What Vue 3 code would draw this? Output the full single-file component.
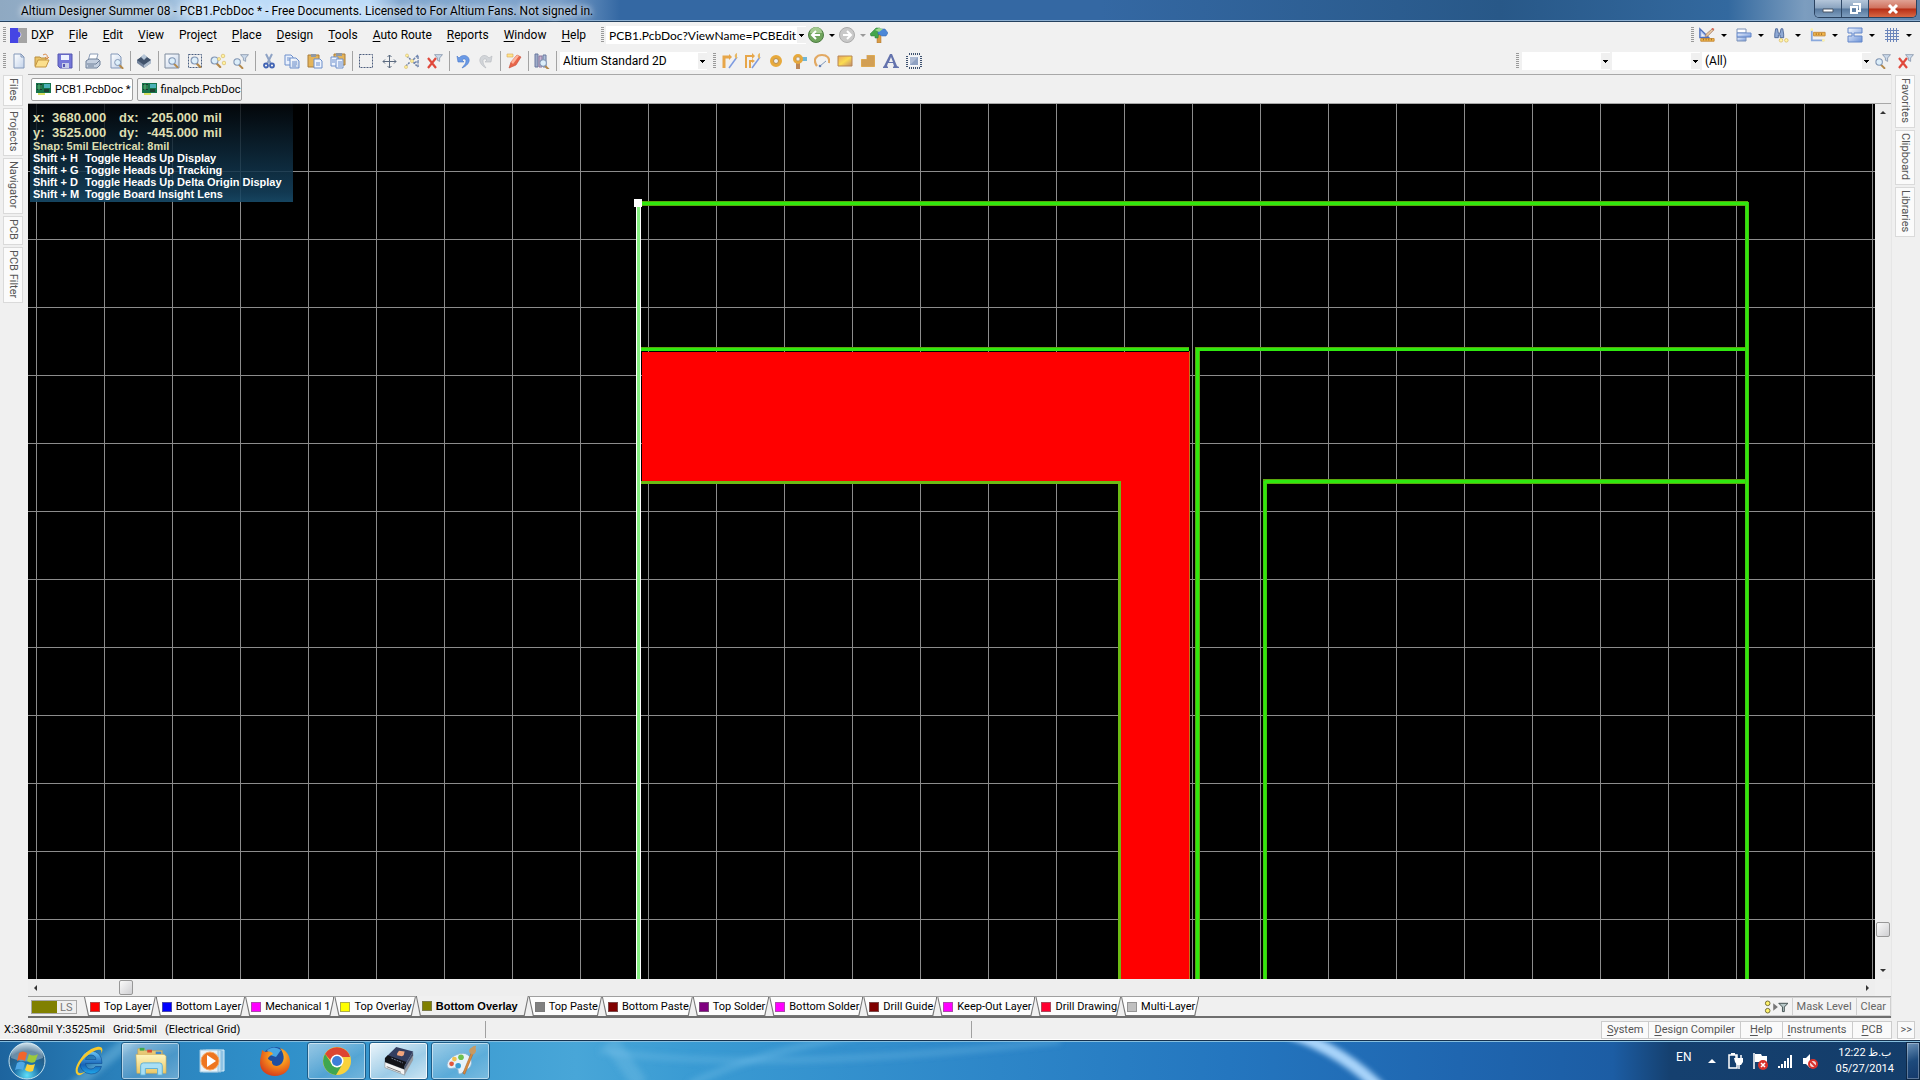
<script setup>

import { ref } from 'vue'

const menus = [
    ['D', 'X', 'P'], ['', 'F', 'ile'], ['', 'E', 'dit'], ['', 'V', 'iew'], ['Proje', 'c', 't'],
    ['', 'P', 'lace'], ['', 'D', 'esign'], ['', 'T', 'ools'], ['', 'A', 'uto Route'],
    ['', 'R', 'eports'], ['', 'W', 'indow'], ['', 'H', 'elp'],
];

const toolGroups = [
    ['new', 'open', 'save'],
    ['print', 'preview'],
    ['layers'],
    ['zoomdoc', 'zoomarea', 'zoompts', 'zoomfilter'],
    ['cut', 'copy', 'paste', 'pastespecial'],
    ['select', 'move', 'deselect', 'clearfilter'],
    ['undo', 'redo'],
    ['pencil'],
    ['browse'],
];

const placeTools = ['route', 'diffroute', 'pad', 'via', 'arc', 'fill', 'polygon', 'string', 'component'];
const utilTools = ['drafting', 'align', 'find', 'dimension', 'room', 'grid'];

const docs = ['PCB1.PcbDoc *', 'finalpcb.PcbDoc'];
const activeDoc = ref(0);

const leftPanels = ['Files', 'Projects', 'Navigator', 'PCB', 'PCB Filter'];
const rightPanels = ['Favorites', 'Clipboard', 'Libraries'];

const hints = [
    ['Shift + H', 'Toggle Heads Up Display'],
    ['Shift + G', 'Toggle Heads Up Tracking'],
    ['Shift + D', 'Toggle Heads Up Delta Origin Display'],
    ['Shift + M', 'Toggle Board Insight Lens'],
];

const layers = [
    { name: 'Top Layer', color: '#ff0000' },
    { name: 'Bottom Layer', color: '#0000ff' },
    { name: 'Mechanical 1', color: '#ff00ff' },
    { name: 'Top Overlay', color: '#ffff00' },
    { name: 'Bottom Overlay', color: '#808000' },
    { name: 'Top Paste', color: '#808080' },
    { name: 'Bottom Paste', color: '#800000' },
    { name: 'Top Solder', color: '#800080' },
    { name: 'Bottom Solder', color: '#ff00ff' },
    { name: 'Drill Guide', color: '#800000' },
    { name: 'Keep-Out Layer', color: '#ff00ff' },
    { name: 'Drill Drawing', color: '#ff0030' },
    { name: 'Multi-Layer', color: '#c0c0c0' },
];
const activeLayer = ref('Bottom Overlay');

const panelButtons = [['S', 'ystem'], ['D', 'esign Compiler'], ['H', 'elp'], ['I', 'nstruments'], ['P', 'CB']];

const apps = [
    { icon: 'ie', label: 'Internet Explorer' },
    { icon: 'explorer', label: 'Explorer', state: 'open' },
    { icon: 'wmp', label: 'Media Player' },
    { icon: 'firefox', label: 'Firefox' },
    { icon: 'chrome', label: 'Chrome', state: 'open' },
    { icon: 'altium', label: 'Altium Designer', state: 'active' },
    { icon: 'paint', label: 'Paint', state: 'open' },
];

</script>

<template>
    <!-- icon sprite -->
    <svg class="sprite" aria-hidden="true">
        <defs>
            <linearGradient id="gPaper" x1="0" y1="0" x2="1" y2="1"><stop offset="0" stop-color="#fff" /><stop offset="1" stop-color="#c3d3ea" /></linearGradient>
            <linearGradient id="gGold" x1="0" y1="0" x2="1" y2="1"><stop offset="0" stop-color="#e8a860" /><stop offset=".5" stop-color="#fbdc50" /><stop offset="1" stop-color="#c08a70" /></linearGradient>
            <linearGradient id="gBlue" x1="0" y1="0" x2="1" y2="1"><stop offset="0" stop-color="#f4f8ff" /><stop offset="1" stop-color="#6d93d8" /></linearGradient>
            <radialGradient id="gOrb" cx=".5" cy=".9" r=".9"><stop offset="0" stop-color="#5fe0f8" /><stop offset=".4" stop-color="#1c6fa8" /><stop offset=".75" stop-color="#285a80" /><stop offset="1" stop-color="#b8d4e4" /></radialGradient>
            <radialGradient id="gFox" cx=".6" cy=".3" r=".7"><stop offset="0" stop-color="#ffd83a" /><stop offset=".5" stop-color="#f58a1c" /><stop offset="1" stop-color="#d9431a" /></radialGradient>
            <linearGradient id="gFolder" x1="0" y1="0" x2="0" y2="1"><stop offset="0" stop-color="#fdf5c0" /><stop offset="1" stop-color="#ecc968" /></linearGradient>
            <linearGradient id="gIe" x1="0" y1="0" x2="0" y2="1"><stop offset="0" stop-color="#6cc8f4" /><stop offset=".6" stop-color="#1763b8" /><stop offset="1" stop-color="#1fa9ea" /></linearGradient>
        </defs>
        <symbol id="lens" viewBox="0 0 16 16">
            <path d="M9 11l4 4" stroke="#b5894a" stroke-width="2.4" stroke-linecap="round" />
            <circle cx="7" cy="8" r="3.7" fill="#dceefa" stroke="#8296b4" stroke-width="1.2" />
        </symbol>
        <symbol id="funnel" viewBox="0 0 16 16"><path d="M1 2h14l-5 6v6l-4-2V8z" fill="#cbd9ea" stroke="#60748f" /></symbol>
        <symbol id="app" viewBox="0 0 16 16">
            <path d="M1 10L6 2l9 2-4 9z" fill="#27354c" /><path d="M1 10l10 3 4-9v3l-4 8L1 12z" fill="#8b98a8" />
            <path d="M6 6l2-2 3 1-1 3-4-1z" fill="#f0a070" />
        </symbol>
        <symbol id="dxp" viewBox="0 0 18 18"><path d="M0 1h9v4c3 0 3 6 0 6v6H0z" fill="#4545e4" /><path d="M9 1h9v16H9v-5c4-1 4-7 0-7z" fill="#a4a4a4" /></symbol>
        <symbol id="new" viewBox="0 0 16 16"><path d="M3 1h7l3 3v11H3z" fill="url(#gPaper)" stroke="#8297b8" /><path d="M10 1v3h3" fill="none" stroke="#8297b8" /></symbol>
        <symbol id="open" viewBox="0 0 16 16">
            <path d="M1 13V4h5l1 1h5v3" fill="#e9c367" stroke="#b98e3f" /><path d="M1 14l3-7h11l-3 7z" fill="#fbdf8c" stroke="#c39543" />
            <path d="M9 2c3-2 5 0 4 3m-2-1l2 2 2-2" fill="none" stroke="#d98c4a" />
        </symbol>
        <symbol id="save" viewBox="0 0 16 16"><path d="M1 1h14v14H3l-2-2z" fill="#7476d8" stroke="#5556b0" /><path d="M4 2h8v5H4z" fill="#edf2ff" /><path d="M5 10h7v5H5z" fill="#c7cce8" /><path d="M6 11h2v3H6z" fill="#5556b0" /></symbol>
        <symbol id="print" viewBox="0 0 16 16"><path d="M5 1h8l-2 7H3z" fill="#fff" stroke="#8b9cb6" /><path d="M1 8l3-2h9l2 2v4l-3 3H1z" fill="#c4cfdf" stroke="#6f8099" /><path d="M2 11h9l3-3M3 13h6" fill="none" stroke="#6f8099" /></symbol>
        <symbol id="preview" viewBox="0 0 16 16"><path d="M3 1h7l3 3v11H3z" fill="url(#gPaper)" stroke="#8297b8" /><use href="#lens" x="4" y="3" width="13" height="13" /></symbol>
        <symbol id="layers" viewBox="0 0 16 16"><path d="M1 7l7-5 7 5v3l-7 5-7-5z" fill="#74849c" /><path d="M1 7l7-5 7 5-7 5z" fill="#41536c" /><path d="M5 4l3-3 3 3-3 3z" fill="#b6c6d8" /><path d="M8 12v3l7-5V7z" fill="#aebccd" /></symbol>
        <symbol id="zoomdoc" viewBox="0 0 16 16"><path d="M1 1h14v14H1z" fill="url(#gPaper)" stroke="#7c8a9d" /><use href="#lens" x="2" y="1" width="14" height="14" /></symbol>
        <symbol id="zoomarea" viewBox="0 0 16 16"><path d="M1.500 1.500h13v13h-13z" fill="none" stroke="#4a5f80" stroke-dasharray="2 1" /><use href="#lens" x="1" y="0" width="15" height="15" /></symbol>
        <symbol id="zoompts" viewBox="0 0 16 16"><use href="#lens" x="-2" y="0" width="15" height="15" /><g fill="#fff2a0" stroke="#d7ba68" stroke-width=".7"><circle cx="13" cy="3" r="1.8" /><circle cx="9" cy="6" r="1.5" /><circle cx="14" cy="10" r="1.8" /></g></symbol>
        <symbol id="zoomfilter" viewBox="0 0 16 16"><use href="#lens" x="-2" y="2" width="14" height="14" /><use href="#funnel" x="7" y="0" width="9" height="10" /></symbol>
        <symbol id="cut" viewBox="0 0 16 16"><path d="M5 1l5 10M11 1L6 11" stroke="#8fa3c5" stroke-width="2" /><g fill="none" stroke="#4264b4" stroke-width="1.8"><circle cx="5" cy="12.500" r="2" /><circle cx="11" cy="12.500" r="2" /></g></symbol>
        <symbol id="copy" viewBox="0 0 16 16"><path d="M1 2h6l2 2v8H1z" fill="#eaf1fd" stroke="#6c8fcb" /><path d="M6 5h6l3 3v7H6z" fill="url(#gPaper)" stroke="#6c8fcb" /><path d="M3 5h3M3 7h3M8 9h5M8 11h5M8 13h4" stroke="#6c8fcb" /></symbol>
        <symbol id="paste" viewBox="0 0 16 16"><path d="M1 2h11v12H1z" fill="#e4b45a" stroke="#a97d3a" /><path d="M4 1h5v3H4z" fill="#8f99a6" /><path d="M7 6h6l2 2v7H7z" fill="#eef4fe" stroke="#6c8fcb" /><path d="M9 10h4M9 12h4" stroke="#6c8fcb" /></symbol>
        <symbol id="pastespecial" viewBox="0 0 16 16"><path d="M4 1h11v11H4z" fill="#e4b45a" stroke="#a97d3a" /><path d="M6 0h6v3H6z" fill="#8f99a6" /><path d="M1 4h7v9H1z" fill="#eef4fe" stroke="#6c8fcb" /><path d="M6 6h7v9H6z" fill="#eef4fe" stroke="#6c8fcb" /><path d="M8 9h4M8 11h4M8 13h4M2 7h3M2 9h3" stroke="#6c8fcb" /></symbol>
        <symbol id="select" viewBox="0 0 16 16"><path d="M1.500 1.500h13v13h-13z" fill="none" stroke="#4e5f7e" stroke-dasharray="2 1" /></symbol>
        <symbol id="move" viewBox="0 0 16 16"><path d="M8.500 2v13M2 8.500h13M6.500 4l2-2 2 2M6.500 13l2 2 2-2M4 6.500l-2 2 2 2M13 6.500l2 2-2 2" fill="none" stroke="#5c6b80" /></symbol>
        <symbol id="deselect" viewBox="0 0 16 16"><path d="M3 3l4 4 3 3 4 4M2 13l4-4" fill="none" stroke="#6e82a5" stroke-width="1.500" stroke-dasharray="2 1" /><path d="M9 7l5-5v5M10 10l4-2v6" fill="none" stroke="#7187b0" stroke-width="1.500" stroke-dasharray="3 1" /><g fill="#fff2a0" stroke="#d7ba68" stroke-width=".6"><circle cx="3" cy="2.500" r="1.500" /><circle cx="2" cy="14" r="1.500" /><circle cx="8" cy="8" r="1.500" /></g></symbol>
        <symbol id="clearfilter" viewBox="0 0 16 16"><use href="#funnel" x="7" y="0" width="9" height="10" /><path d="M1 5l8 10M9 5L1 15" stroke="#e0493c" stroke-width="2.200" /></symbol>
        <symbol id="undo" viewBox="0 0 16 16"><path d="M2 3l1 6h6l-2-2c2-2 4-1 4 1 0 3-2 4-4 7 5-2 8-6 7-9-1-4-7-5-10-1z" fill="#6a9ae6" stroke="#4676c8" stroke-width=".6" /></symbol>
        <symbol id="redo" viewBox="0 0 16 16"><path d="M14 3l-1 6H7l2-2c-2-2-4-1-4 1 0 3 1 4 3 7-4-2-7-6-6-9 1-4 6-5 9-1z" fill="#d2d5d9" stroke="#b5b9be" stroke-width=".6" /></symbol>
        <symbol id="pencil" viewBox="0 0 16 16"><path d="M3 15l2-6 6-7 4 2-5 8z" fill="#e8654a" stroke="#c44d38" stroke-width=".6" /><path d="M5 9l6-7 2 1-6 8z" fill="#ffb49a" /><path d="M1 1h6v3H1z" fill="#ffe58a" stroke="#d9a45a" stroke-width=".6" /></symbol>
        <symbol id="browse" viewBox="0 0 16 16"><path d="M1 1h3v13H1z" fill="#9fabc9" stroke="#68799e" /><path d="M5 3h3v11H5z" fill="#c7b3d2" stroke="#8c769d" /><path d="M9 2h3v12H9z" fill="#aebdd8" stroke="#68799e" /><use href="#lens" x="3" y="3" width="14" height="14" /></symbol>
        <symbol id="route" viewBox="0 0 16 16"><path d="M2 15V4h6" fill="none" stroke="#e7a649" stroke-width="3" /><path d="M7 1l3 3-3 3" fill="#e7a649" /><path d="M7 15l8-11" stroke="#7d9be0" stroke-width="1.500" /><path d="M15 0v6c-3-1-3-5 0-6z" fill="#e7b863" /></symbol>
        <symbol id="diffroute" viewBox="0 0 16 16"><path d="M1 15V3h7M5 15V8h3" fill="none" stroke="#e7a649" stroke-width="2" /><path d="M7 0l3 3-3 3M7 6l3 2-3 2" fill="#e7a649" /><path d="M7 15l8-11" stroke="#7d9be0" stroke-width="1.500" /><path d="M15 0v6c-3-1-3-5 0-6z" fill="#e7b863" /></symbol>
        <symbol id="pad" viewBox="0 0 16 16"><circle cx="8" cy="8" r="4" fill="#fff8d8" stroke="#e7a93c" stroke-width="4" /><circle cx="8" cy="8" r="2.500" fill="#f0f0f0" stroke="#b78c4b" /></symbol>
        <symbol id="via" viewBox="0 0 16 16"><path d="M9 4h7v4H9z" fill="#6fb7d8" /><path d="M5 10h4v6H5z" fill="#bd8757" /><circle cx="7" cy="6" r="3.500" fill="#fff6cc" stroke="#e7a93c" stroke-width="3" /><circle cx="7" cy="6" r="2" fill="#f0f0f0" stroke="#b78c4b" stroke-width=".7" /></symbol>
        <symbol id="arc" viewBox="0 0 16 16"><path d="M3 13C-2 6 3 2 8 2s8 3 7 8" fill="none" stroke="#e2a963" stroke-width="2.200" /><path d="M6 13l6-5" stroke="#8199bb" /><circle cx="6" cy="13" r="1.300" fill="#6582b7" /></symbol>
        <symbol id="fill" viewBox="0 0 16 16"><path d="M1 3h14v10H1z" fill="url(#gGold)" stroke="#b78554" /></symbol>
        <symbol id="polygon" viewBox="0 0 16 16"><path d="M1 6h6V2h8v12H1z" fill="#edb956" /><path d="M1 8h14M1 10h14M1 12h14M7 4h8M7 6h8M3 6v8M5 6v8M7 2v12M9 2v12M11 2v12M13 2v12" stroke="#bf8c54" stroke-width=".7" /></symbol>
        <symbol id="string" viewBox="0 0 16 16"><path d="M0 15v-1l1-1L7 1h2l5 12 2 1v1h-6v-1l1-1-1-3H5l-1 3 1 1v1zM6 9h4L8 4z" fill="#6473ad" /></symbol>
        <symbol id="component" viewBox="0 0 16 16"><path d="M3 1h11M3 15h11M1 3v11M15 3v11" fill="none" stroke="#3e5270" stroke-width="2" stroke-dasharray="1 1" /><path d="M3.500 3.500h9v9h-9z" fill="#8fa1c2" stroke="#f4f7fc" /><path d="M4 4h8L4 12z" fill="#aebbd4" /></symbol>
        <symbol id="drafting" viewBox="0 0 18 16"><path d="M1 1v10h10z" fill="#b9cdf4" stroke="#4c6ebc" stroke-width="1.500" /><path d="M3 6v3h3z" fill="#f1f1f1" /><path d="M7 10l1-3 7-6 2 1-7 7z" fill="#e9c8a0" stroke="#a88a78" /><path d="M14 1l1-1 2 1-1 2z" fill="#d9604c" /><path d="M2 12h15v3H2z" fill="#f0b54b" stroke="#c48735" /><path d="M5 12v2M8 12v2M11 12v2M14 12v2" stroke="#9d6a22" /></symbol>
        <symbol id="align" viewBox="0 0 16 16"><path d="M1 2h9v4H1z" fill="#fff" stroke="#7d92b8" /><path d="M1 10h9v4H1z" fill="url(#gBlue)" stroke="#7d92b8" /><path d="M1 6h14v4H1z" fill="url(#gBlue)" stroke="#6386c9" /></symbol>
        <symbol id="find" viewBox="0 0 18 18"><path d="M2 8l1-6h2l1 5h2l1-5h2l1 6v4H8V9H6v3H2z" fill="#8fa9d4" stroke="#4c6797" /><g fill="#fff4a8" stroke="#d8b860" stroke-width=".8"><circle cx="9" cy="15" r="2" /><circle cx="15" cy="15" r="2" /></g></symbol>
        <symbol id="dimension" viewBox="0 0 18 16"><path d="M2 2v12h14" fill="none" stroke="#89a8dc" stroke-width="2" /><path d="M4 5h13v4H4z" fill="#f0b54b" stroke="#c48735" /><path d="M7 6v2M10 6v2M13 6v2" stroke="#9d6a22" /><circle cx="2" cy="2" r="1.500" fill="#fff4a8" /><circle cx="15" cy="14" r="1.500" fill="#fff4a8" /></symbol>
        <symbol id="room" viewBox="0 0 16 16"><path d="M1 1h14v5H7v3h8v6H1V9h4V6H1z" fill="url(#gBlue)" stroke="#6386c9" /></symbol>
        <symbol id="grid" viewBox="0 0 16 16"><path d="M3.500 1v14M6.500 1v14M9.500 1v14M12.500 1v14M1 3.500h14M1 6.500h14M1 9.500h14M1 12.500h14" stroke="#6c86bb" /></symbol>
        <symbol id="back" viewBox="0 0 16 16"><circle cx="8" cy="8" r="7.500" fill="#6fa45c" stroke="#4d7d42" /><path d="M2 6a6 6 0 0 1 12 0z" fill="#a5cb91" /><path d="M12 8H5M8 4L4 8l4 4" fill="none" stroke="#fff" stroke-width="2" /></symbol>
        <symbol id="forward" viewBox="0 0 16 16"><circle cx="8" cy="8" r="7.500" fill="#c9c9c9" stroke="#aaa" /><path d="M4 8h7M8 4l4 4-4 4" fill="none" stroke="#fff" stroke-width="2" /></symbol>
        <symbol id="palm" viewBox="0 0 18 16"><path d="M7 7h4v9H7z" fill="#d79b45" stroke="#a8702c" stroke-width=".5" /><path d="M0 7l6-6h4L9 5l-1 6H5V9H1z" fill="#45a54b" stroke="#2c7c36" stroke-width=".5" /><path d="M8 2h7l3 4-2 3h-4L8 7z" fill="#4b87d7" stroke="#2f63ad" stroke-width=".5" /><path d="M5 3l4-2 4 1-4 3z" fill="#9edb8a" /></symbol>
        <symbol id="pcb" viewBox="0 0 16 12"><path d="M0 0h15v10H0z" fill="#16734b" /><path d="M1 1h5v6H1z" fill="#183a30" /><path d="M3 1v6M1 3h5M1 5h5" stroke="#54d37e" stroke-width=".8" /><path d="M8 1h6v4H8z" fill="#4ab0b8" /><path d="M8 6h5v3H8z" fill="#1c4232" /><path d="M2 10h7v2H2z" fill="#d7e061" /></symbol>

        <symbol id="orb" viewBox="0 0 38 38">
            <circle cx="19" cy="19" r="18" fill="url(#gOrb)" stroke="#c5e2ee" /><path d="M3 16a16 16 0 0 1 32 0q-16 7-32 0z" fill="#fff" opacity=".3" />
            <path d="M11 11q4-3 8 0l-2 8q-4-3-8 0z" fill="#f0652c" /><path d="M21 12q4 3 9 0l-3 8q-4 2-8-1z" fill="#9cc93c" />
            <path d="M9 21q4-3 8 0l-2 7q-4-2-8 0z" fill="#4fa8e6" /><path d="M19 22q4 2 8 0l-2 7q-4 2-8-1z" fill="#fdd33a" />
        </symbol>
        <symbol id="ie" viewBox="0 0 32 32">
            <path d="M29 18.500H12.500q.5 5.500 5.500 5.500 3 0 4.500-2.500h6Q26 29 18 29 7 28 7 17.500 8 6 18 6q11 .500 11 12.500zM23 14.500q-.5-4.500-5-4.500t-5.500 4.500z" fill="url(#gIe)" stroke="#0d4b91" stroke-width=".6" />
            <path d="M5 30C-3 26 11 4 24 2c5-1 7 2 4 7 1-4 0-5-4-4C14 8 3 21 5 27q2 3 8-1-5 5-8 4z" fill="#f6c92d" />
        </symbol>
        <symbol id="explorer" viewBox="0 0 34 32">
            <path d="M3 3h7l1 2h18v8H3z" fill="#e7c976" stroke="#c6a147" stroke-width=".6" /><path d="M5 2h5v3H5z" fill="#3fa84a" /><path d="M13 4h5v3h-5z" fill="#d94b33" /><path d="M22 6h6v3h-6z" fill="#3a87d4" />
            <path d="M1 9h30l2 2v18H2z" fill="url(#gFolder)" stroke="#d0aa4c" stroke-width=".6" />
            <path d="M6 31V21q0-3 3-3h17q3 0 3 3v10h-5v-7H11v7z" fill="#a8dff5" stroke="#5bafd8" />
        </symbol>
        <symbol id="wmp" viewBox="0 0 32 32"><path d="M9 5h18v21H9z" fill="#8fc4e6" stroke="#d7effb" /><path d="M6 5h18v22H6z" fill="#c5e3f4" stroke="#8bbddd" /><path d="M3 5h18v22H3z" fill="#e8f3fa" stroke="#9bc6e0" /><circle cx="13" cy="16" r="9" fill="#ee7620" stroke="#f5ab6a" /><path d="M10 10l9 6-9 6z" fill="#fff" /></symbol>
        <symbol id="firefox" viewBox="0 0 32 32">
            <circle cx="16" cy="15" r="13" fill="#1f4fa0" /><path d="M8 5q7-5 14 0l-5 7-6-2z" fill="#47a6e4" />
            <path d="M3 5q2 2 4 2c4-1 6 0 7 2-2 1-5 3-5 5 2 1 2 2 4 2-1 5 6 7 10 2 4-6 0-12-2-15 6 2 10 7 10 14 0 9-7 14-15 14S1 26 1 18C1 12 3 8 3 5z" fill="url(#gFox)" />
        </symbol>
        <symbol id="chrome" viewBox="0 0 32 32">
            <circle cx="16" cy="16" r="14" fill="#f9d23c" /><path d="M4 9a14 14 0 0 1 24 0l1 3H16a6 6 0 0 0-5 5z" fill="#dd4532" /><path d="M4 9a14 14 0 0 0 11 21l6-10a6 6 0 0 1-10-1z" fill="#3fa650" />
            <circle cx="16" cy="16" r="6.500" fill="#fff" /><circle cx="16" cy="16" r="5" fill="#3f7fd8" />
        </symbol>
        <symbol id="altium" viewBox="0 0 34 32">
            <path d="M2 17l21 8v6L2 23z" fill="#f4f4f4" stroke="#8a8a8a" stroke-width=".6" /><path d="M4 22l15 6" stroke="#777" />
            <path d="M23 25L32 9v6l-9 16z" fill="#9a9da2" />
            <path d="M14 1l18 5-9 15L2 13z" fill="#333e60" /><path d="M2 13l3-3 20 7-2 4v4L2 17z" fill="#121318" /><path d="M23 21l9-15v4l-9 15z" fill="#4a526b" />
            <path d="M15 8l2-3 6 1-1 4-2 1-5-1z" fill="#f2a47c" /><path d="M9 13l12 5" stroke="#7c88a0" stroke-dasharray="2 1" />
        </symbol>
        <symbol id="paint" viewBox="0 0 34 32">
            <path d="M13 9C22 5 29 11 28 19c-1 6-7 6-9 9-3 3-5 2-5-1 0-4-3-4-7-3-8 1-6-11 6-15z" fill="#e6f2fa" stroke="#88b4d3" />
            <circle cx="17" cy="12" r="3" fill="#6cc04f" /><circle cx="10" cy="14" r="2.500" fill="#f0c350" /><circle cx="7" cy="19" r="2.500" fill="#e2573d" /><circle cx="14" cy="21" r="3" fill="#3a9fd3" />
            <path d="M28 7l2 1-9 22-2-1z" fill="#d98b3e" stroke="#a9642a" stroke-width=".6" /><path d="M26 7q-1-4 2-5 3-3 5-2-1 2 0 5-1 4-4 4z" fill="#c79a63" />
        </symbol>
        <symbol id="power" viewBox="0 0 16 18"><path d="M2 3h8v13H2z" fill="none" stroke="#fff" stroke-width="1.500" /><path d="M4 1h4v2H4z" fill="#fff" /><path d="M7 6h9v4l-2 3h-4l-2-3z" fill="#fff" /><path d="M9 3v3M14 3v3M12 13v4" stroke="#fff" stroke-width="1.500" /></symbol>
        <symbol id="flag" viewBox="0 0 16 18"><path d="M2 1v16" stroke="#fff" stroke-width="1.500" /><path d="M3 2h6l1 2h5v8H8l-1-2H3z" fill="#fff" /><circle cx="11" cy="13" r="5" fill="#d9312b" /><path d="M9 11l4 4M13 11l-4 4" stroke="#fff" stroke-width="1.500" /></symbol>
        <symbol id="signal" viewBox="0 0 16 16"><path d="M1 13h2v2H1zM4 11h2v4H4zM7 8h2v7H7zM10 5h2v10h-2zM13 2h2v13h-2z" fill="#fff" /></symbol>
        <symbol id="volume" viewBox="0 0 16 16"><path d="M1 5h3l4-4v14l-4-4H1z" fill="#fff" /><circle cx="11" cy="11" r="4" fill="#f4dada" stroke="#d9312b" stroke-width="2" /><path d="M8 8l6 6" stroke="#d9312b" stroke-width="2" /></symbol>
    </svg>

    <div class="window">
        <header class="titlebar">
            <svg class="icon"><use href="#app" /></svg>
            <h1>Altium Designer Summer 08 - PCB1.PcbDoc * - Free Documents. Licensed to For Altium Fans. Not signed in.</h1>
            <div class="caption">
                <button class="min" aria-label="Minimize"><svg viewBox="0 0 12 12"><path d="M1 6h10v3H1z" fill="#fff" stroke="#4a5666" /></svg></button>
                <button class="max" aria-label="Restore"><svg viewBox="0 0 12 12"><path d="M4 1h7v7H9" fill="none" stroke="#fff" stroke-width="2" /><path d="M2 4h6v6H2z" fill="none" stroke="#fff" stroke-width="2" /></svg></button>
                <button class="close" aria-label="Close"><svg viewBox="0 0 12 12"><path d="M2 2l8 8M10 2l-8 8" stroke="#fff" stroke-width="3" /></svg></button>
            </div>
        </header>

        <nav class="bar menubar">
            <i class="grip"></i>
            <svg class="icon dxp"><use href="#dxp" /></svg>
            <button v-for="m in menus" :key="m.join('')" class="menu">{{ m[0] }}<u>{{ m[1] }}</u>{{ m[2] }}</button>
            <i class="grip addressGrip"></i>
            <span class="combo address"><select aria-label="Address"><option>PCB1.PcbDoc?ViewName=PCBEdit</option></select></span>
            <button class="tool nav" aria-label="Back"><svg class="icon"><use href="#back" /></svg></button>
            <i class="caret"></i>
            <button class="tool nav" aria-label="Forward"><svg class="icon"><use href="#forward" /></svg></button>
            <i class="caret pale"></i>
            <button class="tool nav" aria-label="Home"><svg class="icon wide"><use href="#palm" /></svg></button>
            <div class="utils">
                <i class="grip"></i>
                <button v-for="t in utilTools" :key="t" class="tool split" :aria-label="t">
                    <svg class="icon"><use :href="'#' + t" /></svg><i class="caret"></i>
                </button>
            </div>
        </nav>

        <div class="bar toolbar">
            <i class="grip"></i>
            <div v-for="(g, n) in toolGroups" :key="n" class="group">
                <button v-for="t in g" :key="t" class="tool" :aria-label="t"><svg class="icon"><use :href="'#' + t" /></svg></button>
            </div>
            <span class="combo viewMode"><select aria-label="View configuration"><option>Altium Standard 2D</option></select></span>
            <i class="grip placeGrip"></i>
            <button v-for="t in placeTools" :key="t" class="tool" :aria-label="t"><svg class="icon"><use :href="'#' + t" /></svg></button>
            <div class="filters">
                <i class="grip"></i>
                <span class="combo net"><select aria-label="Net"><option></option></select></span>
                <span class="combo net"><select aria-label="Component"><option></option></select></span>
                <span class="combo all"><select aria-label="Filter"><option>(All)</option></select></span>
                <button class="tool" aria-label="Zoom filter"><svg class="icon"><use href="#zoomfilter" /></svg></button>
                <button class="tool" aria-label="Clear filter"><svg class="icon"><use href="#clearfilter" /></svg></button>
            </div>
        </div>

        <main class="body">
            <aside class="side left">
                <button v-for="p in leftPanels" :key="p">{{ p }}</button>
            </aside>

            <section class="workspace">
                <div class="docTabs">
                    <button v-for="(d, n) in docs" :key="d" :class="{ active: n === activeDoc }" @click="activeDoc = n">
                        <svg><use href="#pcb" /></svg>{{ d }}
                    </button>
                </div>

                <div class="editor">
                    <div class="canvas">
                        <svg class="board">
                            <defs>
                                <pattern id="mesh" x="8" y="67" width="68" height="68" patternUnits="userSpaceOnUse">
                                    <path d="M0 0h68v1H1v67H0z" fill="#8c8c8c" />
                                </pattern>
                            </defs>
                            <rect width="100%" height="100%" fill="url(#mesh)" />
                            <path d="M614 248h547v2000h-68V377H614z" fill="#ff0000" />
                            <g fill="none" stroke="#5aa80c">
                                <path d="M613 99.500H1720M1169.500 2000V243M1237 377.500H1717" stroke-width="5" />
                                <path d="M1719 98V2000M613 245H1161M1168 245H1717M1237 2000V375" stroke-width="4" />
                            </g>
                            <g fill="none" stroke="#2fe80f" stroke-width="3">
                                <path d="M613 99.500H1720M1169.500 2000V245M1237 377.500H1717" />
                                <path d="M1719 98V2000M613 245.500H1161M1168 245.500H1717M1237 2000V377" />
                            </g>
                            <path d="M613 378.500H1091.500V2000" fill="none" stroke="#6cba14" stroke-width="3" />
                            <path d="M1161.500 247V2000" stroke="#c2741c" />
                            <path d="M610.500 100V2000" stroke="#fff" stroke-width="5" />
                            <path d="M610.500 100V2000" stroke="#86ee82" stroke-width="3" />
                            <rect x="606" y="95" width="8" height="8" fill="#fff" />
                        </svg>
                        <div class="hud">
                            <div class="coords">
                                <span>x:</span><span>3680.000</span><span>dx:</span><span>-205.000</span><span>mil</span>
                                <span>y:</span><span>3525.000</span><span>dy:</span><span>-445.000</span><span>mil</span>
                            </div>
                            <p class="snap">Snap: 5mil Electrical: 8mil</p>
                            <p v-for="h in hints" :key="h[0]"><span>{{ h[0] }}</span>{{ h[1] }}</p>
                        </div>
                    </div>
                    <div class="scroll vertical">
                        <button class="up" aria-label="Scroll up"></button>
                        <i class="thumb"></i>
                        <button class="down" aria-label="Scroll down"></button>
                    </div>
                    <div class="scroll horizontal">
                        <button class="prev" aria-label="Scroll left"></button>
                        <i class="thumb"></i>
                        <button class="next" aria-label="Scroll right"></button>
                    </div>
                </div>

                <div class="layerBar">
                    <button class="layerSet"><i></i>LS</button>
                    <button v-for="l in layers" :key="l.name" class="layer" :class="{ active: l.name === activeLayer }" @click="activeLayer = l.name">
                        <i :style="{ background: l.color }"></i><span>{{ l.name }}</span>
                    </button>
                    <div class="mask">
                        <button aria-label="Mask filter">
                            <svg viewBox="0 0 26 16"><g fill="#fff36b" stroke="#6c6730"><circle cx="4" cy="4" r="2.500" /><circle cx="4" cy="12" r="2.500" /></g><path d="M10 4l5 4-5 4z" fill="#777" /><path d="M16 4h10l-4 4v5h-2V8z" fill="#b8c8c8" stroke="#3c4a4a" /></svg>
                        </button>
                        <button>Mask Level</button>
                        <button>Clear</button>
                    </div>
                </div>
            </section>

            <aside class="side right">
                <button v-for="p in rightPanels" :key="p">{{ p }}</button>
            </aside>
        </main>

        <footer class="status">
            <div class="cell first"><span>X:3680mil Y:3525mil</span><span>Grid:5mil</span><span>(Electrical Grid)</span></div>
            <div class="cell second"></div>
            <div class="panels">
                <button v-for="p in panelButtons" :key="p[1]"><u>{{ p[0] }}</u>{{ p[1] }}</button>
            </div>
            <button class="more">&gt;&gt;</button>
        </footer>

        <div class="taskbar">
            <svg class="aero" preserveAspectRatio="none" viewBox="0 0 1920 40">
                <defs><filter id="soft" x="-20%" y="-50%" width="140%" height="200%"><feGaussianBlur stdDeviation="3" /></filter></defs>
                <g filter="url(#soft)" fill="none">
                    <path d="M1290 -8Q1345 10 1385 54" stroke="#a9d4fa" stroke-width="12" />
                    <path d="M690 44Q760 10 860 -6" stroke="#7cc4ea" stroke-width="8" opacity=".3" />
                    <path d="M600 10Q760 34 1060 0" stroke="#7cc4ea" stroke-width="8" opacity=".25" />
                    <path d="M70 50L140 -10" stroke="#8fd0f0" stroke-width="12" opacity=".35" />
                    <path d="M610 0L640 44" stroke="#8fd0f0" stroke-width="16" opacity=".25" />
                </g>
            </svg>
            <button class="start" aria-label="Start"><svg><use href="#orb" /></svg></button>
            <button v-for="a in apps" :key="a.icon" class="app" :class="a.state" :aria-label="a.label"><svg><use :href="'#' + a.icon" /></svg></button>
            <div class="tray">
                <span class="lang">EN</span>
                <i class="showHidden"></i>
                <svg><use href="#power" /></svg>
                <svg><use href="#flag" /></svg>
                <svg><use href="#signal" /></svg>
                <svg><use href="#volume" /></svg>
                <div class="clock"><span dir="ltr">12:22 <bdi>ب.ظ</bdi></span><span>05/27/2014</span></div>
            </div>
            <button class="desktop" aria-label="Show desktop"></button>
        </div>
    </div>
</template>

<style>
body {
    margin: 0;
    overflow: hidden;
}
</style>

<style scoped>

.sprite {
    position: absolute;
    width: 0;
    height: 0;
}

.window {
    display: flex;
    flex-direction: column;
    height: 100vh;
    background: #f0f0f0;
    color: #000;
    font: 12px Roboto, "Noto Sans", sans-serif;
}

button {
    margin: 0;
    padding: 0;
    border: none;
    background: none;
    color: inherit;
    font: inherit;
    white-space: nowrap;
}

u {
    text-underline-offset: 2px;
}

.icon {
    display: block;
    flex: none;
    width: 16px;
    height: 16px;
}

.icon.wide {
    width: 18px;
}

/* title bar */

.titlebar {
    display: flex;
    align-items: center;
    box-sizing: border-box;
    height: 22px;
    border-bottom: 1px solid #24415f;
    box-shadow: inset 0 -1px #8db0d2;
    background: linear-gradient(90deg, #8fa9c2 0, #9bbbd9 170px, #bddcf8 200px, #bddcf8 370px, #84a9d0 400px, #7ba0c9 560px, #3468a3 620px, #3468a3 1100px, #285888 1500px, #33699f 90%, #7c9dbf 94%, #5d82aa 100%);
}

.titlebar .icon {
    margin: 0 4px 0 1px;
}

h1 {
    margin: 0;
    font-size: 12px;
    font-weight: normal;
    line-height: 20px;
    white-space: nowrap;
    text-shadow: 0 0 6px #fff, 0 0 8px #fff;
}

.caption {
    display: flex;
    align-self: flex-start;
    margin: 0 3px 0 auto;
    border: 1px solid #2a4260;
    border-top: none;
    border-radius: 0 0 5px 5px;
    overflow: hidden;
}

.caption button {
    display: flex;
    justify-content: center;
    align-items: center;
    width: 27px;
    height: 17px;
    border-right: 1px solid #2f4866;
    background: linear-gradient(#b4c6da, #8aa3bf 48%, #56779c 52%, #7f9fc0);
}

.caption .close {
    width: 47px;
    border-right: none;
    background: linear-gradient(#e0a294, #d0705c 48%, #b62c14 52%, #d86844);
}

.caption svg {
    width: 12px;
    height: 12px;
}

/* menu and tool bars */

.bar {
    display: flex;
    align-items: center;
    height: 26px;
    background: #f1f1f1;
}

.grip {
    flex: none;
    width: 3px;
    height: 16px;
    margin-left: 3px;
    background: repeating-linear-gradient(#9a9a9a 0 1px, transparent 1px 2px);
}

.dxp {
    width: 17px;
    height: 17px;
    margin: 0 4px;
}

.menu {
    margin-right: 15px;
}

.combo {
    position: relative;
    display: block;
    height: 18px;
    background: #fff;
}

.combo select {
    display: block;
    width: 100%;
    height: 18px;
    padding: 0 9px 0 3px;
    border: none;
    outline: none;
    appearance: none;
    background: none;
    color: #000;
    font: inherit;
}

.combo::after {
    content: "";
    position: absolute;
    top: 1px;
    right: 0;
    width: 9px;
    height: 16px;
    background: linear-gradient(#000, #000) 2px 7px / 5px 1px no-repeat, linear-gradient(#000, #000) 3px 8px / 3px 1px no-repeat, linear-gradient(#000, #000) 4px 9px / 1px 1px no-repeat, #f0f0f0;
    pointer-events: none;
}

.caret {
    flex: none;
    border: 3px solid transparent;
    border-top-color: #000;
    border-bottom: none;
}

.caret.pale {
    border-top-color: #999;
}

.addressGrip {
    margin: 0 2px 0 0;
}

.address {
    width: 200px;
    margin-right: 2px;
    font-family: Lato, Roboto, sans-serif;
}

.nav {
    margin-right: 5px;
}

.caret + .nav {
    margin-left: 4px;
}

.utils {
    display: flex;
    align-items: center;
    gap: 9px;
    margin: 0 8px 0 auto;
}

.utils .grip {
    margin-right: -4px;
}

.split {
    display: flex;
    align-items: center;
    gap: 6px;
}

.toolbar > .tool {
    margin-right: 7px;
}

.group {
    display: flex;
    gap: 7px;
    padding: 0 6px 0 5px;
    border-right: 1px solid #a3a3a3;
}

.group .icon {
    margin: 2px 0;
}

.viewMode {
    width: 147px;
    margin-left: 3px;
}

.placeGrip {
    margin: 0 6px;
}

.filters {
    display: flex;
    align-items: center;
    margin: 0 6px 0 auto;
}

.filters .grip {
    margin-right: 3px;
}

.filters .tool {
    margin-left: 7px;
}

.net {
    width: 88px;
    margin-right: 2px;
}

.all {
    width: 169px;
    margin-right: -3px;
}

/* side panels */

.body {
    display: flex;
    flex: 1;
    min-height: 0;
}

.side {
    display: flex;
    flex: none;
    flex-direction: column;
    gap: 2px;
    box-sizing: border-box;
    width: 28px;
    padding: 1px 5px 0 3px;
    font-size: 11px;
    color: #555;
}

.side.right {
    width: 29px;
    border-left: 1px solid #e6e6e6;
}

.side button {
    width: 20px;
    padding: 2px 0 4px;
    border: 1px solid #dadada;
    background: #fbfbfb;
    writing-mode: vertical-rl;
    text-align: left;
    line-height: 18px;
}

.workspace {
    display: flex;
    flex: 1;
    flex-direction: column;
    min-width: 0;
    border-top: 1px solid #a8a8a8;
}

.docTabs {
    display: flex;
    align-items: center;
    gap: 4px;
    height: 28px;
    padding-left: 3px;
    border-bottom: 1px solid #a8a8a8;
    font-size: 11px;
}

.docTabs button {
    display: flex;
    align-items: center;
    height: 23px;
    padding: 0 1px 0 4px;
    border: 1px solid #a0a0a0;
    border-radius: 2px;
    background: #f3f3f3;
}

.docTabs .active {
    background: #fff;
}

.docTabs svg {
    width: 16px;
    height: 12px;
    margin-right: 3px;
}

/* board editor */

.editor {
    display: grid;
    flex: 1;
    grid-template: 1fr 17px / 1fr 16px;
    min-height: 0;
}

.canvas {
    position: relative;
    overflow: hidden;
    background: #000;
}

.board {
    position: absolute;
    width: 100%;
    height: 100%;
}

.hud {
    position: absolute;
    top: 0;
    left: 2px;
    box-sizing: border-box;
    width: 263px;
    padding: 6px 0 2px 3px;
    background: linear-gradient(rgba(4, 8, 12, .8), rgba(20, 64, 92, .88) 90%, rgba(24, 76, 106, .9));
    color: #fff;
    font: bold 11px/12px "Liberation Sans", Arial, sans-serif;
    white-space: nowrap;
}

.coords {
    display: grid;
    grid-template-columns: 19px 67px 28px 56px 1fr;
    font-size: 13px;
    line-height: 15px;
}

.coords,
.snap {
    color: #dedeb0;
}

.hud p {
    margin: 0;
}

.hud p span {
    display: inline-block;
    width: 52px;
}

.scroll {
    display: flex;
    align-items: center;
    justify-content: space-between;
    background: #eeeeee;
}

.vertical {
    flex-direction: column;
    padding: 7px 0;
}

.horizontal {
    padding: 0 6px;
}

.scroll button {
    border: 3px solid transparent;
}

.scroll .up {
    border-bottom-color: #333;
    border-top: none;
}

.scroll .down {
    border-top-color: #333;
    border-bottom: none;
}

.scroll .prev {
    border-right-color: #333;
    border-left: none;
}

.scroll .next {
    border-left-color: #333;
    border-right: none;
}

.thumb {
    box-sizing: border-box;
    width: 14px;
    height: 15px;
    border: 1px solid #979797;
    border-radius: 2px;
    background: linear-gradient(135deg, #fafafa, #cfcfd2);
}

.vertical .thumb {
    margin: auto 0 32px;
}

.horizontal .thumb {
    margin: 0 auto 0 82px;
}

/* layer tabs */

.layerBar {
    display: flex;
    align-items: flex-start;
    height: 19px;
    border-top: 1px solid #a0a0a0;
    border-bottom: 2px solid #6e6e6e;
    font-size: 11px;
}

.layerSet {
    display: flex;
    align-items: center;
    box-sizing: border-box;
    width: 46px;
    height: 14px;
    margin: 3px 7px 0 3px;
    border: 1px solid #a8a8a8;
    color: #777;
}

.layerSet i {
    width: 25px;
    height: 12px;
    margin-right: 3px;
    background: #808000;
}

.layer {
    position: relative;
    display: flex;
    align-items: center;
    height: 19px;
    padding: 0 4px 0 6px;
    background: #777;
    clip-path: polygon(0 0, 100% 0, calc(100% - 4px) 100%, 4px 100%);
}

.layer::before {
    content: "";
    position: absolute;
    inset: 0 1px 1px;
    background: #fdfdfd;
    clip-path: polygon(0 0, 100% 0, calc(100% - 4px) 100%, 4px 100%);
}

.layer.active::before {
    background: #f0f0f0;
}

.layer.active {
    margin-top: -1px;
    height: 20px;
    padding-right: 11px;
    font-family: "Liberation Sans", Arial, sans-serif;
    font-weight: bold;
}

.layer i {
    position: relative;
    box-sizing: border-box;
    width: 10px;
    height: 10px;
    margin-right: 4px;
    border: 1px solid rgba(120, 120, 120, .6);
}

.layer span {
    position: relative;
}

.mask {
    display: flex;
    margin: 0 0 0 auto;
    color: #666;
}

.mask button {
    height: 19px;
    padding: 0 4px;
    border: 1px solid #d0d0d0;
    border-left-width: 0;
    background: #f3f3f3;
}

.mask svg {
    display: block;
    width: 24px;
    height: 16px;
}

/* status bar */

.status {
    display: flex;
    align-items: center;
    height: 19px;
    padding-top: 2px;
    border-bottom: 1px solid #fff;
    font-size: 11px;
}

.cell {
    display: flex;
    box-sizing: border-box;
    height: 17px;
    border-right: 1px solid #a0a0a0;
    line-height: 17px;
}

.first {
    gap: 8px;
    width: 486px;
    padding-left: 4px;
}

.second {
    width: 486px;
}

.panels {
    display: flex;
    margin: 0 5px 0 auto;
    border-left: 1px solid #cccccc;
}

.status button {
    height: 18px;
    padding: 0 5px;
    border: 1px solid #cccccc;
    border-left: none;
    background: #fafafa;
    color: #555;
}

.panels button:nth-child(n + 3):not(:nth-child(4)) {
    padding: 0 9px;
}

.status .more {
    margin-right: 5px;
    padding: 0 2px;
    border-left: 1px solid #cccccc;
}

/* taskbar */

.taskbar {
    position: relative;
    display: flex;
    align-items: center;
    box-sizing: border-box;
    height: 40px;
    border-top: 1px solid #16324f;
    box-shadow: inset 0 1px #86bede;
    background: linear-gradient(90deg, #1d649e 0, #2a80ba 6%, #2f8fc9 14%, #48a6d8 30%, #3a9bd3 36%, #2d86c8 52%, #2476bf 64%, #1f66b0 76%, #1c5da4 84%, #15406f 87%, #143d6a 100%);
}

.aero {
    position: absolute;
    inset: 0;
    width: 100%;
    height: 100%;
}

.start {
    position: relative;
    width: 54px;
    height: 38px;
    margin-right: 5px;
}

.start svg {
    display: block;
    width: 38px;
    height: 38px;
    margin: 0 auto;
}

.app {
    position: relative;
    display: flex;
    justify-content: center;
    align-items: center;
    box-sizing: border-box;
    width: 59px;
    height: 38px;
    margin-right: 3px;
    border: 1px solid transparent;
    border-radius: 3px;
}

.app svg {
    width: 32px;
    height: 32px;
}

.app.open {
    border-color: #1c5c88;
    background: linear-gradient(150deg, rgba(255, 255, 255, .5), rgba(255, 255, 255, .15) 60%, rgba(255, 255, 255, .3));
    box-shadow: inset 0 0 0 1px rgba(255, 255, 255, .5);
}

.app.active {
    border-color: #1c5c88;
    background: linear-gradient(150deg, rgba(255, 255, 255, .9), rgba(255, 255, 255, .5) 60%, rgba(255, 255, 255, .75));
    box-shadow: inset 0 0 0 1px rgba(255, 255, 255, .8);
}

.tray {
    position: relative;
    display: flex;
    align-items: center;
    gap: 9px;
    margin-left: auto;
    color: #fff;
}

.tray svg {
    width: 16px;
    height: 18px;
}

.lang {
    margin: 0 8px 8px 0;
}

.showHidden {
    margin-right: 2px;
    border: 4px solid transparent;
    border-top: none;
    border-bottom-color: #fff;
}

.clock {
    display: flex;
    flex-direction: column;
    align-items: center;
    margin: 0 12px 0 8px;
    font-size: 11px;
    line-height: 16px;
}

.desktop {
    position: relative;
    width: 14px;
    height: 38px;
    border: 1px solid #0d2745;
    background: linear-gradient(160deg, #6d93b8, #1d4a7c 50%, #14386a);
    box-shadow: inset 0 0 0 1px rgba(255, 255, 255, .3);
}

</style>
